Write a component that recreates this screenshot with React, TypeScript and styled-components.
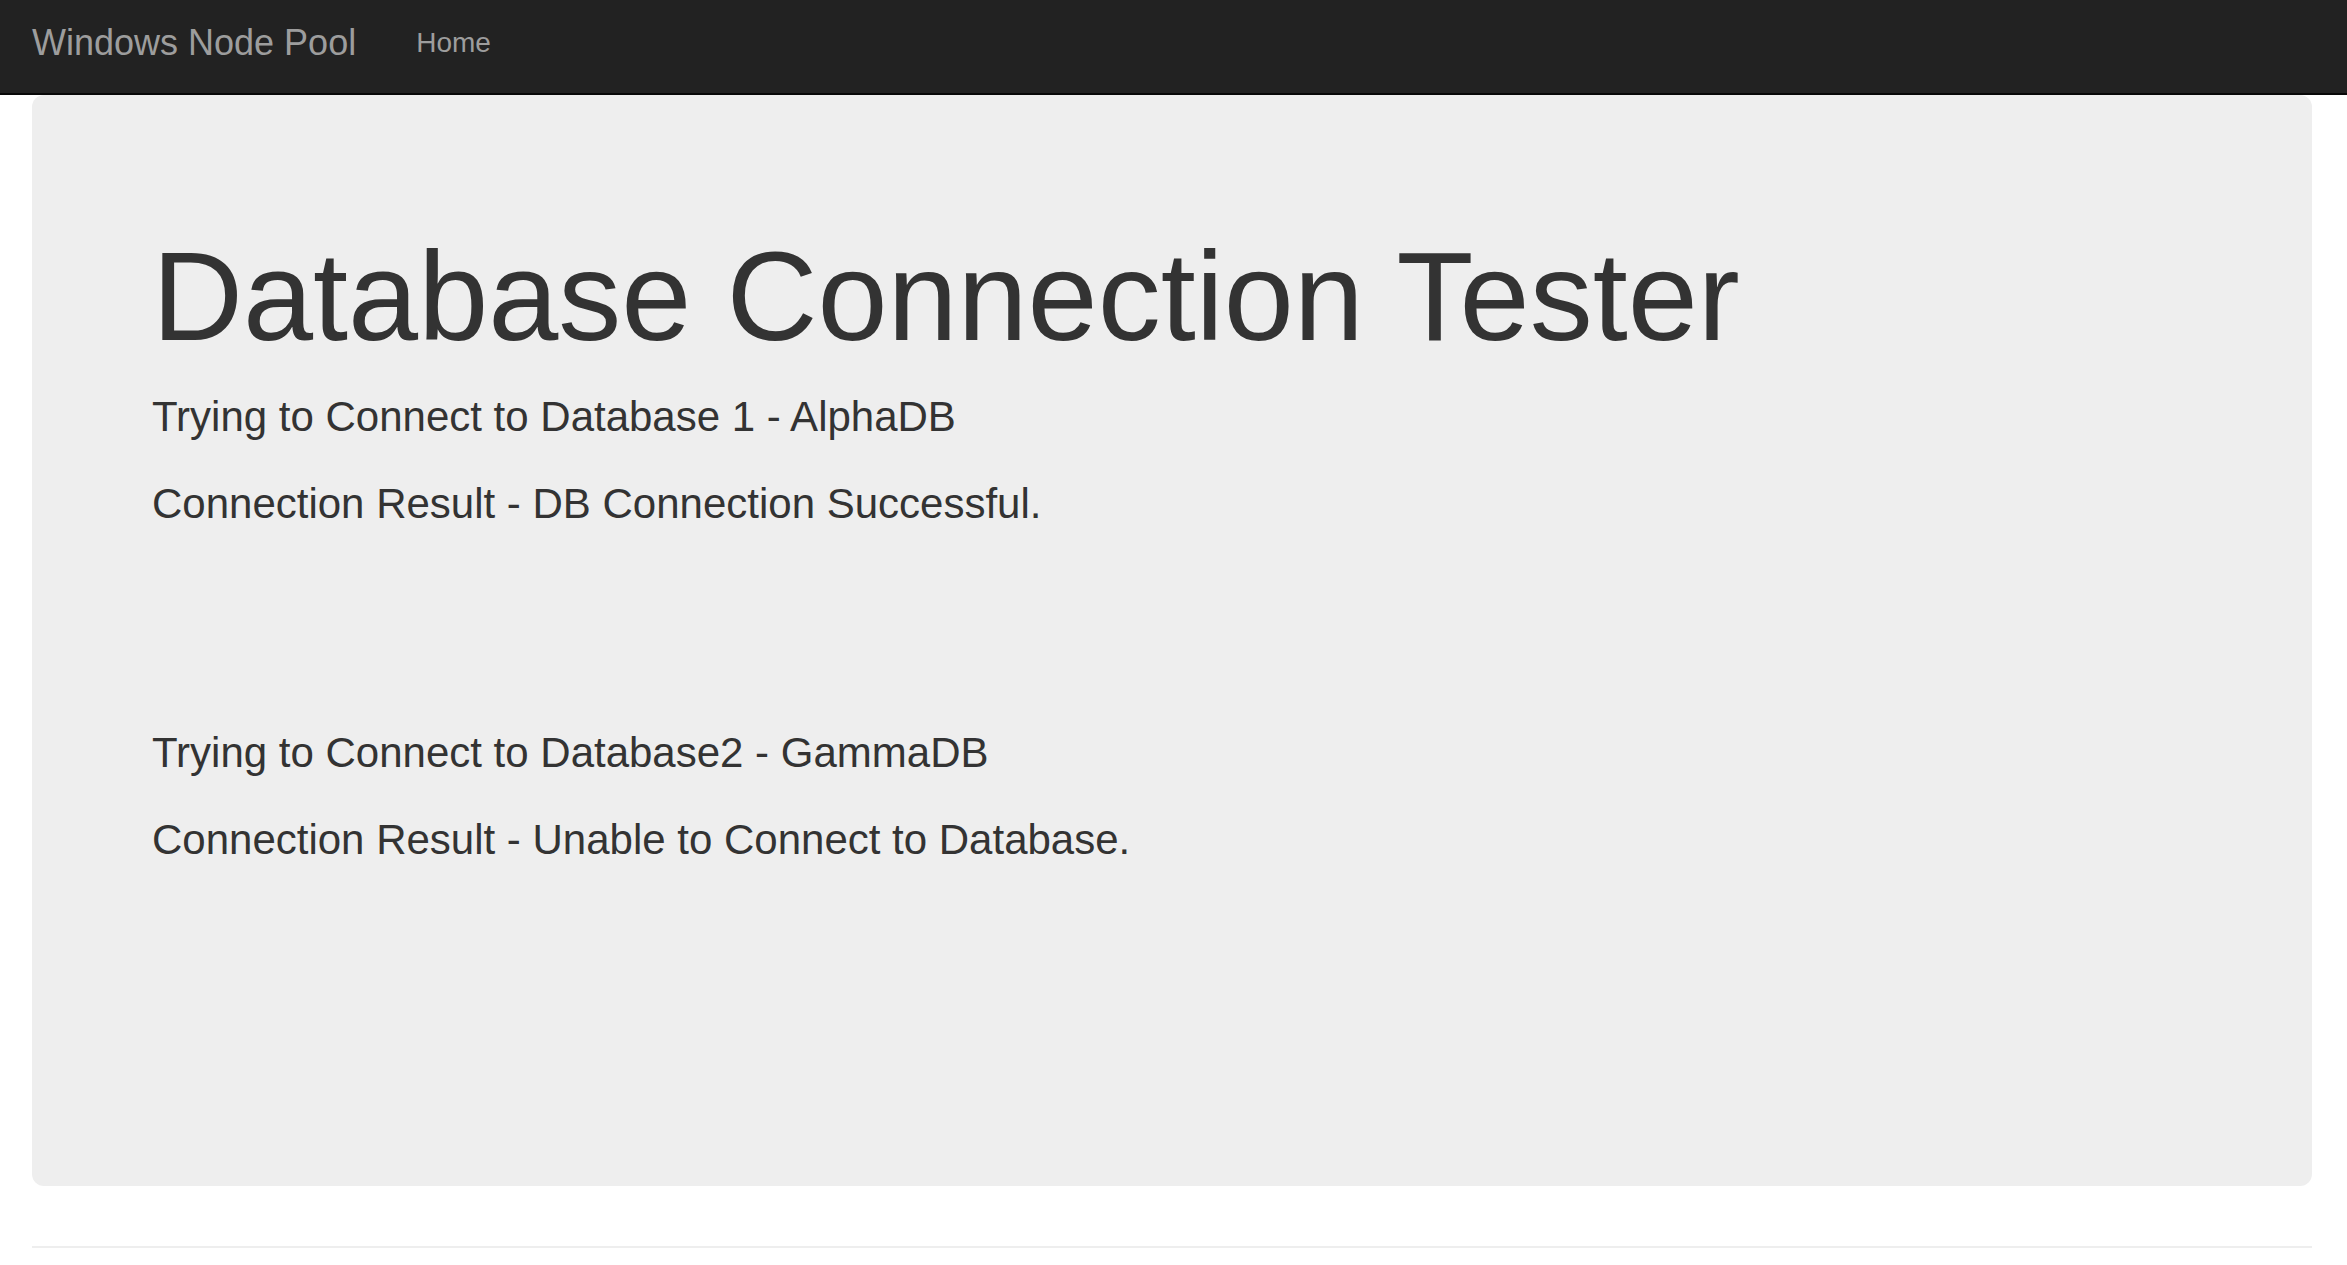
import React from "react";
import styled, { createGlobalStyle } from "styled-components";

const GlobalStyle = createGlobalStyle`
  html, body {
    margin: 0;
    padding: 0;
    background: #fff;
  }
  body {
    font-family: "Liberation Sans", Arial, Helvetica, sans-serif;
    color: #333;
  }
  * { box-sizing: border-box; }
`;

const Navbar = styled.nav`
  height: 95px;
  background: #222;
  border-bottom: 2px solid #080808;
`;

const NavInner = styled.div`
  width: 2280px;
  margin-left: 32px;
  padding-top: 23px;
  display: flex;
  align-items: flex-start;
`;

const Brand = styled.a`
  font-size: 36px;
  line-height: 40px;
  color: #9d9d9d;
  text-decoration: none;
  padding-right: 30px;
`;

const NavLink = styled.a`
  font-size: 28px;
  line-height: 40px;
  color: #9d9d9d;
  text-decoration: none;
  padding: 0 30px;
`;

const Container = styled.main`
  width: 2280px;
  margin-left: 32px;
`;

const Jumbotron = styled.section`
  background: #eee;
  border-radius: 12px;
  padding: 96px 120px 126px;
`;

const Title = styled.h1`
  font-size: 126px;
  line-height: 1.1;
  font-weight: 400;
  color: #333;
  margin: 37px 0 21px;
`;

const ResultBlock = styled.div`
  padding-bottom: 162px;
`;

const Line = styled.p`
  font-size: 42px;
  line-height: 57px;
  font-weight: 300;
  margin: 0 0 30px;
`;

const Rule = styled.hr`
  border: 0;
  border-top: 2px solid #eee;
  margin: 60px 0 0;
`;

const results = [
  {
    attempt: "Trying to Connect to Database 1 - AlphaDB",
    result: "Connection Result - DB Connection Successful.",
  },
  {
    attempt: "Trying to Connect to Database2 - GammaDB",
    result: "Connection Result - Unable to Connect to Database.",
  },
];

export default function App() {
  return (
    <>
      <GlobalStyle />
      <Navbar>
        <NavInner>
          <Brand href="#">Windows Node Pool</Brand>
          <NavLink href="#">Home</NavLink>
        </NavInner>
      </Navbar>
      <Container>
        <Jumbotron>
          <Title>Database Connection Tester</Title>
          {results.map((r) => (
            <ResultBlock key={r.attempt}>
              <Line>{r.attempt}</Line>
              <Line>{r.result}</Line>
            </ResultBlock>
          ))}
        </Jumbotron>
        <Rule />
      </Container>
    </>
  );
}
